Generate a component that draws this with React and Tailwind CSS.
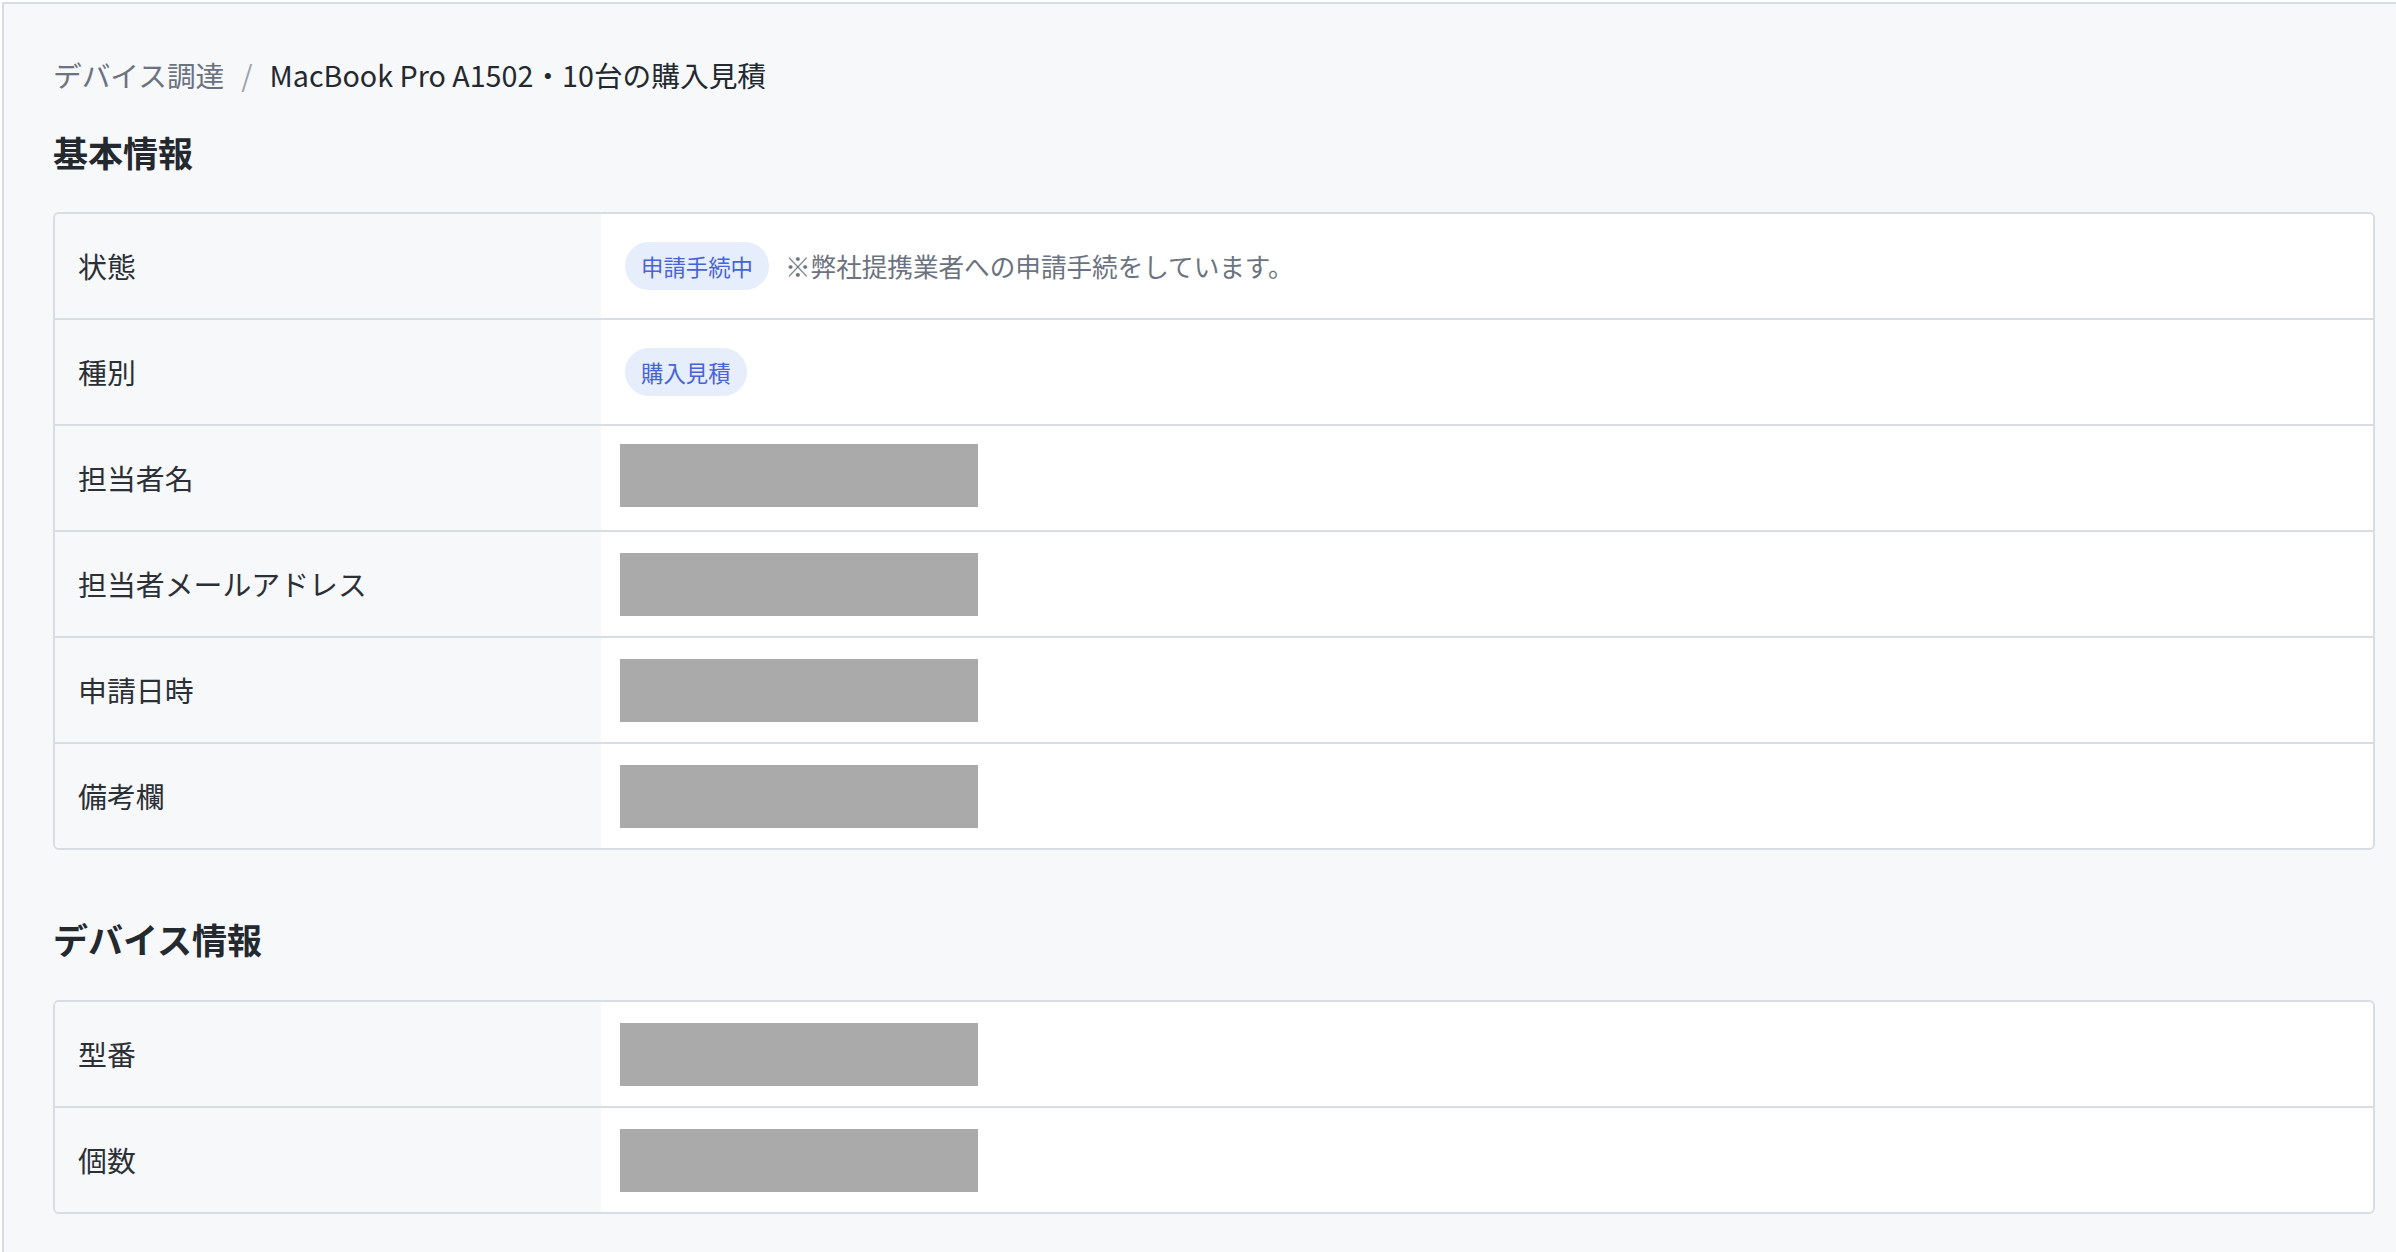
import React from 'react';

const FONT = { fontFamily: '"Noto Sans CJK JP", "Noto Sans", sans-serif' };

const BASIC_ROWS = [
  { label: '状態', kind: 'status' },
  { label: '種別', kind: 'type' },
  { label: '担当者名', kind: 'redacted', shift: '-mt-[5px]' },
  { label: '担当者メールアドレス', kind: 'redacted' },
  { label: '申請日時', kind: 'redacted' },
  { label: '備考欄', kind: 'redacted' },
];

const DEVICE_ROWS = [
  { label: '型番', kind: 'redacted' },
  { label: '個数', kind: 'redacted' },
];

function Badge({ children }) {
  return (
    <span className="inline-flex items-center h-[48px] px-[16px] rounded-full bg-[#e6edfb] text-[#4863d6] text-[22.4px] leading-none">
      {children}
    </span>
  );
}

function Value({ kind, shift }) {
  if (kind === 'status') {
    return (
      <div className="flex items-center gap-[16px]">
        <Badge>申請手続中</Badge>
        <span className="text-[25.6px] text-[#6b7280]">※弊社提携業者への申請手続をしています。</span>
      </div>
    );
  }
  if (kind === 'type') return <Badge>購入見積</Badge>;
  // 伏せ字ブロック
  return <div className={`-ml-[5px] w-[358px] h-[63px] bg-[#aaaaaa] ${shift || ''}`} />;
}

function InfoTable({ rows }) {
  return (
    <div className="border-2 border-[#d8dce4] rounded-[6px] overflow-hidden">
      {rows.map((row, i) => {
        const last = i === rows.length - 1;
        return (
          <div
            key={row.label}
            className={`flex ${last ? 'h-[104px]' : 'h-[106px] border-b-2 border-[#d8dce4]'}`}
          >
            <div className="w-[546px] shrink-0 flex items-center pl-[23px] bg-[#f7f8fa] text-[28.9px] text-[#2b2f36]">
              {row.label}
            </div>
            <div className="flex-1 flex items-center pl-[24px] bg-white">
              <Value kind={row.kind} shift={row.shift} />
            </div>
          </div>
        );
      })}
    </div>
  );
}

export default function App() {
  return (
    <div className="min-h-screen bg-white pt-[2px] pl-[2px]" style={FONT}>
      <div className="min-h-[1250px] bg-[#f7f8fa] border-t-2 border-l-2 border-[#d8dce4] pl-[49px] pr-[21px] pt-[50px] pb-[38px]">
        {/* Breadcrumb */}
        <div className="flex items-center h-[42px] text-[28.7px] leading-[42px]">
          <span className="text-[#6b7280]">デバイス調達</span>
          <span className="text-[#9ca3af] mx-[17px]">/</span>
          <span className="text-[#24282f]">MacBook Pro A1502・10台の購入見積</span>
        </div>

        <h2 className="mt-[31px] mb-[36px] text-[35px] leading-[49px] font-bold text-[#24282f]">基本情報</h2>
        <InfoTable rows={BASIC_ROWS} />

        <h2 className="mt-[64px] mb-[37px] text-[35px] leading-[49px] font-bold text-[#24282f]">デバイス情報</h2>
        <InfoTable rows={DEVICE_ROWS} />
      </div>
    </div>
  );
}
